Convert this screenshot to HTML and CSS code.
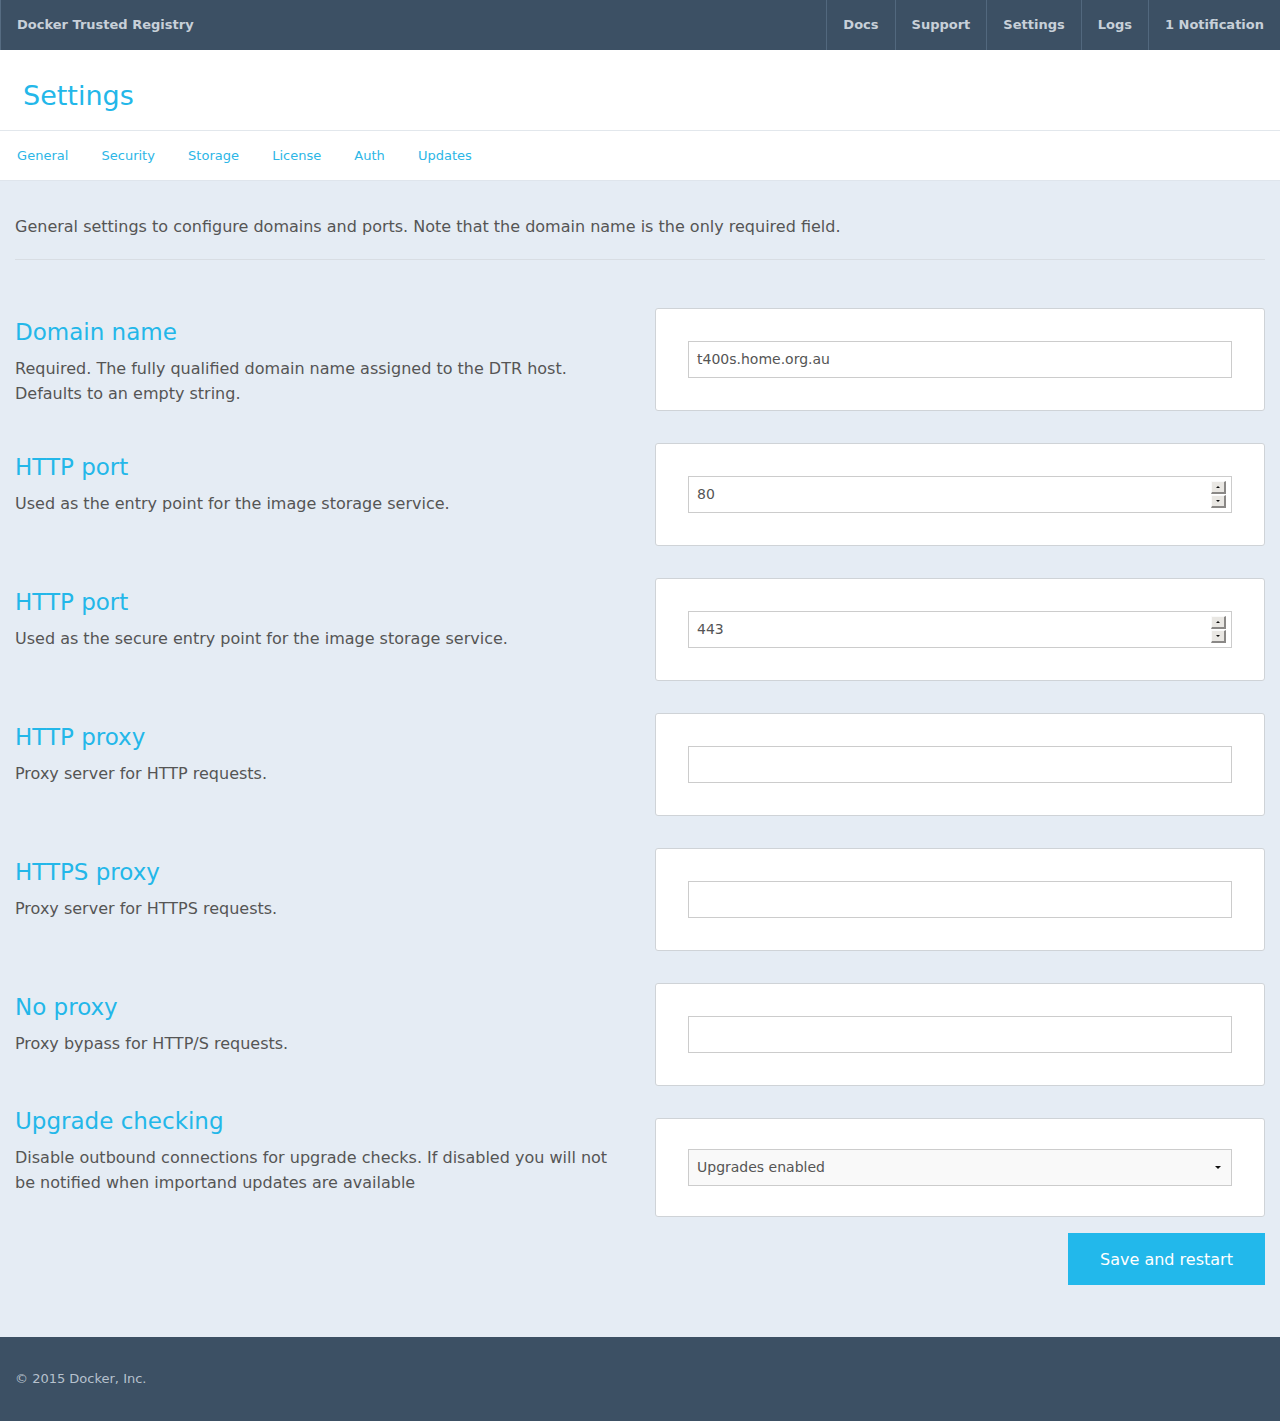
FILE: index.html
```html
<!DOCTYPE html>
<html lang="en">
<head>
<meta charset="utf-8">
<title>Settings - Docker Trusted Registry</title>
<link rel="stylesheet" href="styles.css">
</head>
<body>
<nav class="topbar">
  <div class="brand">Docker Trusted Registry</div>
  <ul class="topnav">
    <li>Docs</li>
    <li>Support</li>
    <li>Settings</li>
    <li>Logs</li>
    <li>1 Notification</li>
  </ul>
</nav>
<header class="page-header">
  <h1>Settings</h1>
</header>
<div class="tabs">
  <a class="tab">General</a>
  <a class="tab">Security</a>
  <a class="tab">Storage</a>
  <a class="tab">License</a>
  <a class="tab">Auth</a>
  <a class="tab">Updates</a>
</div>
<main class="content">
  <p class="intro">General settings to configure domains and ports. Note that the domain name is the only required field.</p>
  <hr class="divider">
  <div class="rows">
    <div class="row">
      <div class="label">
        <h2>Domain name</h2>
        <p>Required. The fully qualified domain name assigned to the DTR host. Defaults to an empty string.</p>
      </div>
      <div class="card"><div class="field"><span class="value">t400s.home.org.au</span></div></div>
    </div>
    <div class="row">
      <div class="label">
        <h2>HTTP port</h2>
        <p>Used as the entry point for the image storage service.</p>
      </div>
      <div class="card"><div class="field"><span class="value">80</span><span class="spin"><span class="sb"><i class="up"></i></span><span class="sb"><i class="down"></i></span></span></div></div>
    </div>
    <div class="row">
      <div class="label">
        <h2>HTTP port</h2>
        <p>Used as the secure entry point for the image storage service.</p>
      </div>
      <div class="card"><div class="field"><span class="value">443</span><span class="spin"><span class="sb"><i class="up"></i></span><span class="sb"><i class="down"></i></span></span></div></div>
    </div>
    <div class="row">
      <div class="label">
        <h2>HTTP proxy</h2>
        <p>Proxy server for HTTP requests.</p>
      </div>
      <div class="card"><div class="field"></div></div>
    </div>
    <div class="row">
      <div class="label">
        <h2>HTTPS proxy</h2>
        <p>Proxy server for HTTPS requests.</p>
      </div>
      <div class="card"><div class="field"></div></div>
    </div>
    <div class="row">
      <div class="label">
        <h2>No proxy</h2>
        <p>Proxy bypass for HTTP/S requests.</p>
      </div>
      <div class="card"><div class="field"></div></div>
    </div>
    <div class="row row-last">
      <div class="label">
        <h2>Upgrade checking</h2>
        <p>Disable outbound connections for upgrade checks. If disabled you will not be notified when importand updates are available</p>
      </div>
      <div class="card card-select"><div class="field select"><span class="value">Upgrades enabled</span><i class="caret"></i></div></div>
    </div>
  </div>
  <div class="actions">
    <button class="btn">Save and restart</button>
  </div>
</main>
<footer class="footer">© 2015 Docker, Inc.</footer>
</body>
</html>
```

FILE: styles.css
```css
* { box-sizing: border-box; }
html, body { margin: 0; padding: 0; }
body {
  font-family: "DejaVu Sans", "Liberation Sans", sans-serif;
  background: #e5ecf4;
  color: #555;
}
.topbar {
  height: 50px;
  background: #3c5064;
  border-left: 1px solid #566c82;
  display: flex;
  align-items: stretch;
  justify-content: space-between;
}
.brand {
  font-size: 13px;
  font-weight: bold;
  color: #c8d0d9;
  padding-left: 16px;
  padding-bottom: 1px;
  display: flex;
  align-items: center;
}
.topnav {
  list-style: none;
  margin: 0;
  padding: 0;
  display: flex;
}
.topnav li {
  display: flex;
  align-items: center;
  padding: 0 16px 1px;
  border-left: 1px solid #52687e;
  font-size: 13px;
  font-weight: bold;
  color: #c8d0d9;
}
.page-header {
  background: #fff;
  height: 81px;
  border-bottom: 1px solid #e2e7ec;
  padding: 0 23px;
  display: flex;
  align-items: center;
}
.page-header h1 {
  margin: 0;
  font-weight: normal;
  font-size: 27px;
  color: #23b7e9;
  position: relative;
  top: 5px;
}
.tabs {
  background: #fff;
  height: 50px;
  display: flex;
  align-items: center;
  padding-left: 0.5px;
  border-bottom: 1px solid #dfe5ec;
}
.tab {
  font-size: 13px;
  color: #2cb6e6;
  padding: 0 16.6px;
}
.content {
  padding: 0 15px;
}
.intro {
  margin: 0;
  padding-top: 33px;
  font-size: 16px;
  line-height: 25px;
}
.divider {
  border: 0;
  border-top: 1px solid #d8dde3;
  margin: 20px 0 0;
}
.rows {
  margin-top: 48px;
  display: flex;
  flex-direction: column;
  gap: 32px;
}
.row {
  display: grid;
  grid-template-columns: 1fr 610px;
  gap: 30px;
  align-items: start;
}
.label { padding-top: 12px; }
.row-last .label { padding-top: 0; margin-top: -9px; }
.label h2 {
  margin: 0;
  font-size: 23px;
  line-height: 25px;
  font-weight: normal;
  color: #23b7e9;
}
.label p {
  margin: 11px 0 0;
  font-size: 16px;
  line-height: 25px;
  color: #555;
}
.card {
  background: #fff;
  border: 1px solid #cfd3d7;
  border-radius: 3px;
  padding: 32px;
}
.card-select { padding: 30px 32px; }
.field {
  height: 37px;
  border: 1px solid #cccccc;
  background: #fff;
  display: flex;
  align-items: center;
  padding: 0 5px 1px 8px;
  font-size: 14px;
  color: #555;
}
.value { flex: 1; }
.spin {
  display: flex;
  flex-direction: column;
  gap: 1px;
  width: 15px;
}
.sb {
  height: 13px;
  background: #e9e7e3;
  border-top: 1px solid #fafafa;
  border-left: 1px solid #fafafa;
  border-right: 2px solid #8a8886;
  border-bottom: 2px solid #8a8886;
  display: flex;
  align-items: center;
  justify-content: center;
}
.sb i {
  width: 0;
  height: 0;
  border-left: 2px solid transparent;
  border-right: 2px solid transparent;
}
.sb .up { border-bottom: 2px solid #111; }
.sb .down { border-top: 2px solid #111; }
.select {
  background: #f9f9f9;
  padding-right: 10px;
}
.caret {
  width: 0;
  height: 0;
  border-left: 3px solid transparent;
  border-right: 3px solid transparent;
  border-top: 3px solid #111;
}
.actions {
  display: flex;
  justify-content: flex-end;
  margin-top: 16px;
  padding-bottom: 52px;
}
.btn {
  font-family: "DejaVu Sans", "Liberation Sans", sans-serif;
  width: 197px;
  height: 52px;
  border: 0;
  background: #22b8eb;
  color: #fff;
  font-size: 16px;
}
.footer {
  height: 84px;
  background: #3c5064;
  color: #b6c1cd;
  font-size: 13px;
  padding-left: 15px;
  padding-bottom: 1px;
  display: flex;
  align-items: center;
}
```
